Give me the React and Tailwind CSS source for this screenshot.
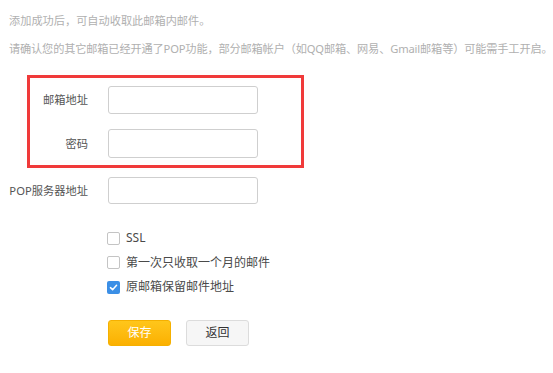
export default function App() {
  const font = { fontFamily: '"Noto Sans", "Noto Sans CJK SC", sans-serif' };
  const CheckRow = ({ checked, label }) => (
    <div className="flex h-[24.6px] items-center pl-[107px]">
      {checked ? (
        <span className="flex h-[13px] w-[13px] items-center justify-center rounded-[2px] bg-[#3b8fe6]">
          <svg width="9" height="9" viewBox="0 0 10 10" fill="none">
            <path d="M1.6 5.2 L4 7.4 L8.4 2.6" stroke="white" strokeWidth="1.7" strokeLinecap="round" strokeLinejoin="round" />
          </svg>
        </span>
      ) : (
        <span className="h-[13px] w-[13px] rounded-[2px] border border-[#c4c4c4] bg-white" />
      )}
      <span className="ml-[6px] text-[12px] leading-[16px] text-[#4a4a4a]">{label}</span>
    </div>
  );
  return (
    <div className="min-h-[373px] w-[553px] bg-white" style={font}>
      <div className="pl-[9px] pt-[12.5px] text-[11.2px] leading-[16px] text-[#b0b0b0]">
        <p>添加成功后，可自动收取此邮箱内邮件。</p>
        <p className="mt-[12.5px] whitespace-nowrap tracking-[-0.15px]">
          请确认您的其它邮箱已经开通了POP功能，部分邮箱帐户（如QQ邮箱、网易、Gmail邮箱等）可能需手工开启。
        </p>
      </div>

      <div className="ml-[27px] mt-[18px] w-[277px] border-[3px] border-[#f03a3a] pb-[7px] pt-[8px]">
        <div className="flex items-center">
          <span className="w-[58px] text-right text-[11.25px] leading-[16px] text-[#555]">邮箱地址</span>
          <div className="ml-[20px] h-[28px] w-[150px] rounded-[3px] border border-[#cfcfcf] bg-white" />
        </div>
        <div className="mt-[15px] flex items-center">
          <span className="w-[58px] text-right text-[11.25px] leading-[16px] text-[#555]">密码</span>
          <div className="ml-[20px] h-[29px] w-[150px] rounded-[3px] border border-[#cfcfcf] bg-white" />
        </div>
      </div>

      <div className="mt-[9px] flex items-center">
        <span className="w-[88px] text-right text-[11.25px] leading-[16px] text-[#555]">POP服务器地址</span>
        <div className="ml-[20px] h-[27px] w-[150px] rounded-[3px] border border-[#cfcfcf] bg-white" />
      </div>

      <div className="mt-[22px]">
        <CheckRow label="SSL" />
        <CheckRow label="第一次只收取一个月的邮件" />
        <CheckRow checked label="原邮箱保留邮件地址" />
      </div>

      <div className="mt-[20px] flex pl-[108px]">
        <button className="h-[26px] w-[63px] rounded-[3px] border border-[#f5b000] bg-gradient-to-b from-[#ffc61a] to-[#fbb000] text-[12px] text-white">
          保存
        </button>
        <button className="ml-[15px] h-[26px] w-[63px] rounded-[3px] border border-[#dcdcdc] bg-[#f6f6f6] text-[12px] text-[#333]">
          返回
        </button>
      </div>
    </div>
  );
}
